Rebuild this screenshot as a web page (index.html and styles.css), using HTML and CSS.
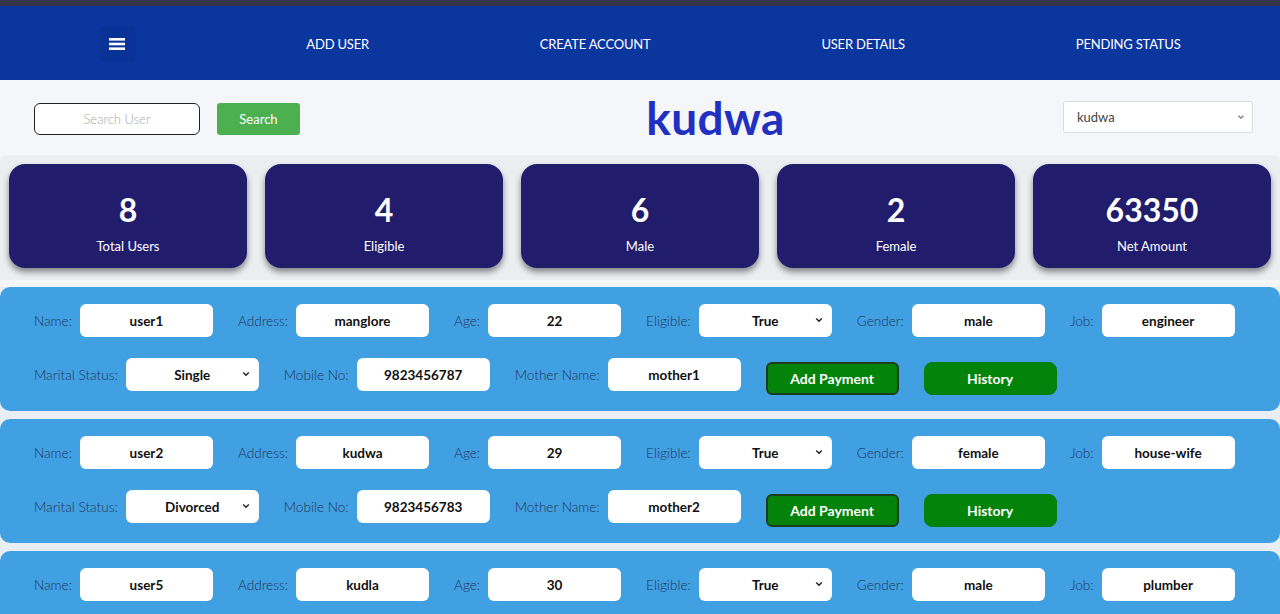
FILE: index.html
```html
<!DOCTYPE html>
<html lang="en">
<head>
<meta charset="utf-8">
<title>kudwa</title>
<link rel="stylesheet" href="styles.css">
</head>
<body>
<div class="topstrip"></div>
<nav class="navbar">
  <button class="menu-btn" aria-label="menu">
    <svg width="16" height="14" viewBox="0 0 16 14"><rect x="0" y="1" width="16" height="2.6" fill="#fff"/><rect x="0" y="5.7" width="16" height="2.6" fill="#fff"/><rect x="0" y="10.4" width="16" height="2.6" fill="#fff"/></svg>
  </button>
  <a class="nav-link">ADD USER</a>
  <a class="nav-link">CREATE ACCOUNT</a>
  <a class="nav-link">USER DETAILS</a>
  <a class="nav-link">PENDING STATUS</a>
</nav>

<header class="toolbar">
  <div class="search-group">
    <div class="search-input">Search User</div>
    <button class="search-btn">Search</button>
  </div>
  <h1 class="title">kudwa</h1>
  <div class="place-select">kudwa
    <svg class="chev" width="8" height="6" viewBox="0 0 8 6"><path d="M1.5 1.8 L4 4.2 L6.5 1.8" stroke="#777" stroke-width="1.2" fill="none"/></svg>
  </div>
</header>

<section class="stats">
  <div class="stat"><div class="num">8</div><div class="lbl">Total Users</div></div>
  <div class="stat"><div class="num">4</div><div class="lbl">Eligible</div></div>
  <div class="stat"><div class="num">6</div><div class="lbl">Male</div></div>
  <div class="stat"><div class="num">2</div><div class="lbl">Female</div></div>
  <div class="stat"><div class="num">63350</div><div class="lbl">Net Amount</div></div>
</section>

<section class="users">
  <div class="user-card">
    <div class="row">
      <span class="label">Name:</span><div class="field">user1</div>
      <span class="label">Address:</span><div class="field">manglore</div>
      <span class="label">Age:</span><div class="field">22</div>
      <span class="label">Eligible:</span><div class="field sel">True<svg class="chev" width="8" height="6" viewBox="0 0 8 6"><path d="M1.2 1.5 L4 4.3 L6.8 1.5" stroke="#222" stroke-width="1.4" fill="none"/></svg></div>
      <span class="label">Gender:</span><div class="field">male</div>
      <span class="label">Job:</span><div class="field">engineer</div>
    </div>
    <div class="row">
      <span class="label">Marital Status:</span><div class="field sel">Single<svg class="chev" width="8" height="6" viewBox="0 0 8 6"><path d="M1.2 1.5 L4 4.3 L6.8 1.5" stroke="#222" stroke-width="1.4" fill="none"/></svg></div>
      <span class="label">Mobile No:</span><div class="field">9823456787</div>
      <span class="label">Mother Name:</span><div class="field">mother1</div>
      <button class="btn pay">Add Payment</button>
      <button class="btn hist">History</button>
    </div>
  </div>

  <div class="user-card">
    <div class="row">
      <span class="label">Name:</span><div class="field">user2</div>
      <span class="label">Address:</span><div class="field">kudwa</div>
      <span class="label">Age:</span><div class="field">29</div>
      <span class="label">Eligible:</span><div class="field sel">True<svg class="chev" width="8" height="6" viewBox="0 0 8 6"><path d="M1.2 1.5 L4 4.3 L6.8 1.5" stroke="#222" stroke-width="1.4" fill="none"/></svg></div>
      <span class="label">Gender:</span><div class="field">female</div>
      <span class="label">Job:</span><div class="field">house-wife</div>
    </div>
    <div class="row">
      <span class="label">Marital Status:</span><div class="field sel">Divorced<svg class="chev" width="8" height="6" viewBox="0 0 8 6"><path d="M1.2 1.5 L4 4.3 L6.8 1.5" stroke="#222" stroke-width="1.4" fill="none"/></svg></div>
      <span class="label">Mobile No:</span><div class="field">9823456783</div>
      <span class="label">Mother Name:</span><div class="field">mother2</div>
      <button class="btn pay">Add Payment</button>
      <button class="btn hist">History</button>
    </div>
  </div>

  <div class="user-card">
    <div class="row">
      <span class="label">Name:</span><div class="field">user5</div>
      <span class="label">Address:</span><div class="field">kudla</div>
      <span class="label">Age:</span><div class="field">30</div>
      <span class="label">Eligible:</span><div class="field sel">True<svg class="chev" width="8" height="6" viewBox="0 0 8 6"><path d="M1.2 1.5 L4 4.3 L6.8 1.5" stroke="#222" stroke-width="1.4" fill="none"/></svg></div>
      <span class="label">Gender:</span><div class="field">male</div>
      <span class="label">Job:</span><div class="field">plumber</div>
    </div>
    <div class="row">
      <span class="label">Marital Status:</span><div class="field sel">Married<svg class="chev" width="8" height="6" viewBox="0 0 8 6"><path d="M1.2 1.5 L4 4.3 L6.8 1.5" stroke="#222" stroke-width="1.4" fill="none"/></svg></div>
      <span class="label">Mobile No:</span><div class="field">9823456785</div>
      <span class="label">Mother Name:</span><div class="field">mother5</div>
      <button class="btn pay">Add Payment</button>
      <button class="btn hist">History</button>
    </div>
  </div>
</section>
</body>
</html>
```

FILE: styles.css
```css
* { box-sizing: border-box; }
html, body { margin: 0; padding: 0; }
body {
  background: #f4f6f9;
  font-family: Lato, "Open Sans", sans-serif;
  overflow: hidden;
}

.topstrip { height: 6px; background: #34334a; }

.navbar {
  height: 74px;
  background: #0b369e;
  display: flex;
  align-items: center;
  justify-content: space-around;
  padding: 0 14px;
}
.menu-btn {
  width: 36px; height: 36px;
  background: #0a3397;
  border: none;
  border-radius: 4px;
  display: flex; align-items: center; justify-content: center;
  padding: 0;
  margin-top: 2px;
}
.nav-link {
  color: #fff;
  font-size: 13px;
  letter-spacing: -0.2px;
  margin-top: 2px;
}

.toolbar {
  height: 75px;
  display: flex;
  align-items: center;
  justify-content: space-between;
  padding: 0 27px 0 34px;
}
.search-group { display: flex; align-items: center; gap: 17px; }
.search-input {
  width: 166px; height: 32px;
  border: 1px solid #222;
  border-radius: 6px;
  background: #fff;
  color: #a8a8a8;
  font-size: 13px;
  font-weight: 300;
  display: flex; align-items: center; justify-content: center;
  margin-top: 2px;
}
.search-btn {
  width: 83px; height: 32px;
  background: #4caf50;
  border: none;
  border-radius: 3px;
  color: #fff;
  font-family: inherit;
  font-size: 13px;
  margin-top: 2px;
}
.title {
  margin: 0 0 0 68px;
  color: #2230c0;
  font-size: 46px;
  font-weight: 700;
  letter-spacing: 0.4px;
}
.place-select {
  position: relative;
  width: 190px; height: 32px;
  background: #fff;
  border: 1px solid #dcdde0;
  border-radius: 3px;
  font-size: 13px;
  color: #444;
  display: flex; align-items: center;
  padding-left: 13px;
  margin-top: -2px;
}
.place-select .chev { position: absolute; right: 7px; top: 12px; }

.stats {
  background: #eceef2;
  border-radius: 8px 8px 0 0;
  display: grid;
  grid-template-columns: repeat(5, 1fr);
  gap: 18px;
  padding: 9px 9px 12px;
  margin-bottom: 7px;
}
.stat {
  height: 104px;
  background: #221c6c;
  border-radius: 16px;
  box-shadow: 0 4px 6px rgba(0,0,0,0.45);
  color: #fff;
  display: flex; flex-direction: column; align-items: center;
  padding-top: 28px;
}
.stat .num { font-size: 32px; font-weight: 700; line-height: 36px; }
.stat .lbl { font-size: 13px; margin-top: 10px; }

.users { display: flex; flex-direction: column; gap: 8px; background: #e8eef4; }
.user-card {
  background: #41a0e1;
  border-radius: 10px;
  padding: 17px 34px 16px;
  display: flex; flex-direction: column; gap: 21px;
}
.row { display: flex; align-items: flex-start; }
.label {
  flex-shrink: 0;
  color: #22355c;
  font-size: 13.6px;
  font-weight: 300;
  line-height: 35px;
  height: 33px;
  margin-right: 8px;
  white-space: nowrap;
}
.field {
  flex-shrink: 0;
  position: relative;
  width: 133px; height: 33px;
  background: #fff;
  border-radius: 6px;
  margin-right: 25px;
  color: #111;
  font-size: 13.5px;
  font-weight: 700;
  display: flex; align-items: center; justify-content: center;
}
.field .chev { position: absolute; right: 9px; top: 13px; }
.btn {
  flex-shrink: 0;
  width: 133px; height: 33px;
  margin-top: 4px;
  margin-right: 25px;
  background: #04830a;
  color: #fff;
  font-family: inherit;
  font-size: 14px;
  font-weight: 700;
  padding: 0;
}
.btn.pay { border: 2px solid #1b3d1b; border-radius: 6px; }
.btn.hist { border: 1px solid #0a7d10; border-radius: 8px; }
```
